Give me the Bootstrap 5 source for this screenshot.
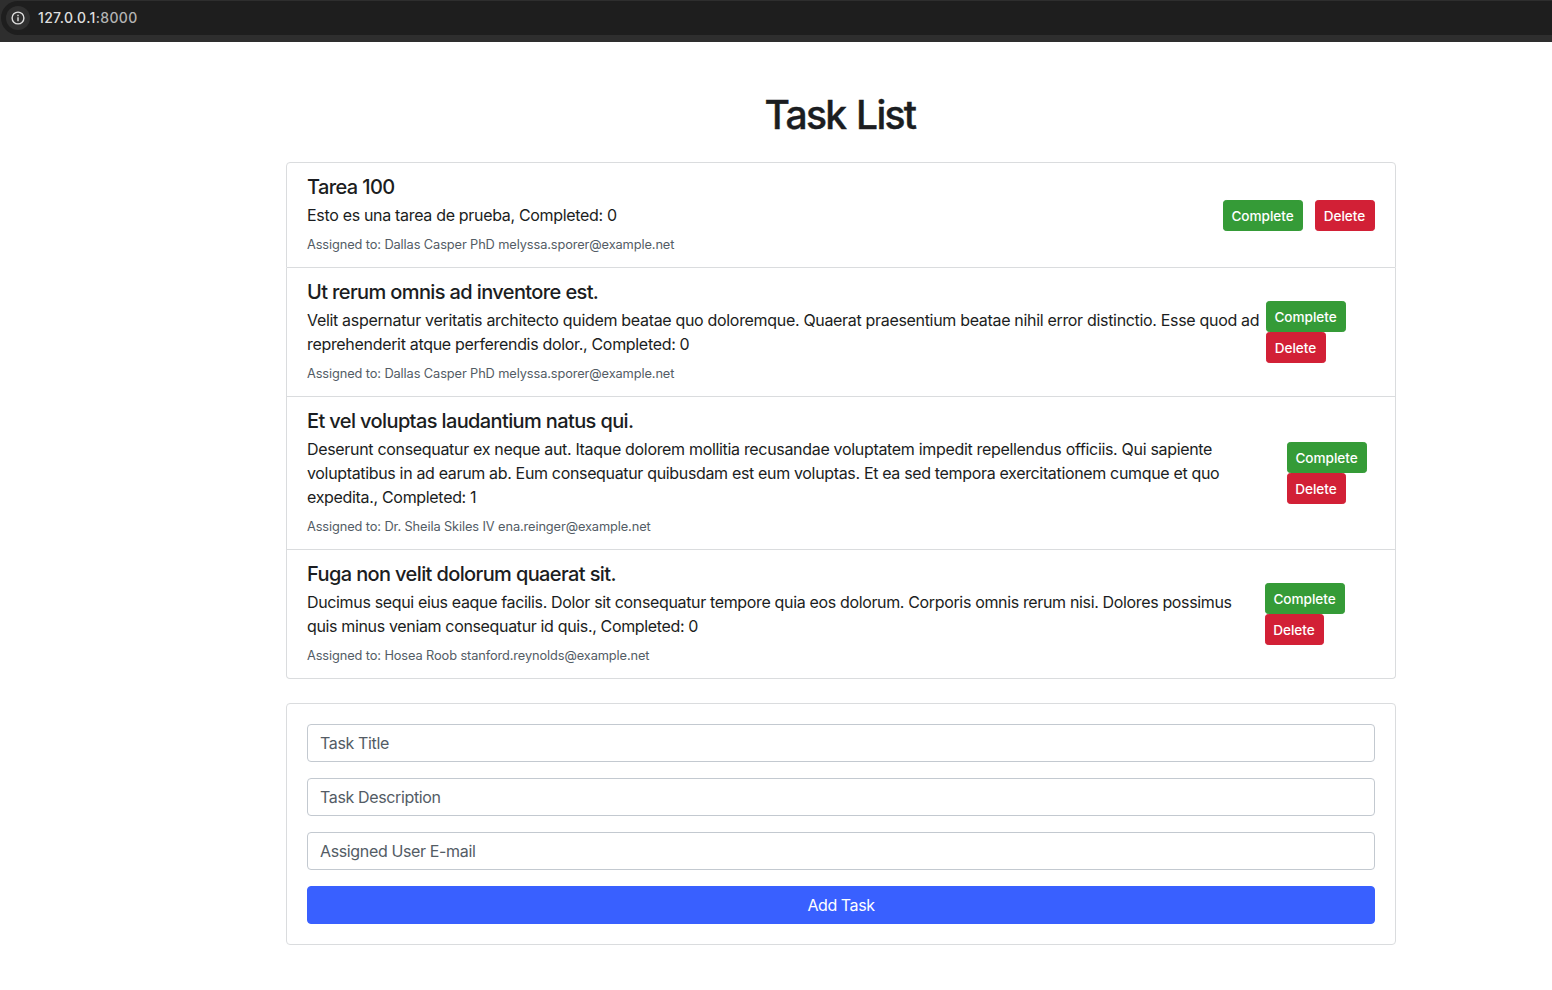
<!DOCTYPE html>
<html lang="en">
<head>
<meta charset="utf-8">
<meta name="viewport" content="width=device-width, initial-scale=1">
<title>Task List</title>
<link href="https://cdn.jsdelivr.net/npm/bootstrap@5.3.0/dist/css/bootstrap.min.css" rel="stylesheet">
<style>
  body { font-family: Inter, "Liberation Sans", sans-serif; color: #1b1d21; letter-spacing: -.32px; overflow: hidden; }
  .address-bar { height: 42px; background: #2e2e2e; padding-top: 1px; }
  .address-field { height: 34px; margin-left: 1px; padding-left: 5px; background: #1e1e1e; border-radius: 17px 0 0 17px; }
  .site-info { width: 24px; height: 24px; background: #303030; }
  .address-text { margin-left: 8px; margin-bottom: 1px; font-size: 14px; font-weight: 500; letter-spacing: .34px; color: #dedede; }
  .address-text span { color: #b4b4b4; }
  .page { padding-left: 130px; }
  .task-area { max-width: 1134px; }
  h1 { font-size: 39px; line-height: 50px; height: 48px; letter-spacing: -1.7px; word-spacing: 2px; padding-right: 2px; -webkit-text-stroke: .4px; }
  h5 { font-size: 20px; letter-spacing: -.62px; }
  .list-group { --bs-list-group-color: #1b1d21; --bs-list-group-border-color: #dadcde; --bs-list-group-border-radius: 4px; --bs-list-group-item-padding-x: 20px; --bs-list-group-item-padding-y: 12px; }
  .task-text { white-space: nowrap; }
  .assignee { font-size: 12.8px; letter-spacing: -.105px; color: #535c65; }
  .btn-sm { --bs-btn-border-radius: 3.2px; --bs-btn-font-size: 13.6px; height: 31px; padding: 5px 8px 3px 7px; font-weight: 500; letter-spacing: -.05px; }
  .btn-success { --bs-btn-bg: #359b37; --bs-btn-border-color: #359b37; width: 80px; }
  .btn-danger { --bs-btn-bg: #d22036; --bs-btn-border-color: #d22036; width: 60px; }
  .btn-primary { --bs-btn-bg: #3960ff; --bs-btn-border-color: #3960ff; --bs-btn-border-radius: 4px; letter-spacing: -.44px; }
  .actions-a { width: 109px; }
  .actions-b { width: 88px; }
  .actions-c { width: 110px; }
  .actions-b .btn-danger, .actions-c .btn-danger { width: 59px; }
  .card { --bs-card-border-color: #dadcde; --bs-card-border-radius: 4px; }
  .form-control { border-color: #c3c9d0; border-radius: 4px; letter-spacing: -.36px; }
  .form-control::placeholder { color: #535c65; }
</style>
</head>
<body class="bg-white">
<header class="address-bar">
  <div class="address-field d-flex align-items-center">
    <div class="site-info rounded-circle d-flex align-items-center justify-content-center">
      <svg width="14" height="14" viewBox="0 0 14 14" fill="none" stroke="#dedede" stroke-width="1.4"><circle cx="7" cy="7" r="5.9"/><path d="M7 6.3v3.9M7 3.8v1.4"/></svg>
    </div>
    <div class="address-text">127.0.0.1<span>:8000</span></div>
  </div>
</header>
<main class="page">
  <div class="container task-area pt-5">
    <h1 class="text-center mb-4">Task List</h1>
    <ul class="list-group mb-4">
      <li class="list-group-item d-flex justify-content-between align-items-center">
        <div class="task-text">
          <h5 class="mb-1">Tarea 100</h5>
          <p class="mb-1">Esto es una tarea de prueba, Completed: 0</p>
          <div><small class="assignee">Assigned to: Dallas Casper PhD melyssa.sporer@example.net</small></div>
        </div>
        <div class="d-flex flex-shrink-0" style="gap:12px">
          <button class="btn btn-success btn-sm">Complete</button>
          <button class="btn btn-danger btn-sm">Delete</button>
        </div>
      </li>
      <li class="list-group-item d-flex justify-content-between align-items-center">
        <div class="task-text">
          <h5 class="mb-1">Ut rerum omnis ad inventore est.</h5>
          <p class="mb-1">Velit aspernatur veritatis architecto quidem beatae quo doloremque. Quaerat praesentium beatae nihil error distinctio. Esse quod ad<br>reprehenderit atque perferendis dolor., Completed: 0</p>
          <div><small class="assignee">Assigned to: Dallas Casper PhD melyssa.sporer@example.net</small></div>
        </div>
        <div class="actions-a d-flex flex-column flex-shrink-0">
          <button class="btn btn-success btn-sm">Complete</button>
          <button class="btn btn-danger btn-sm">Delete</button>
        </div>
      </li>
      <li class="list-group-item d-flex justify-content-between align-items-center">
        <div class="task-text">
          <h5 class="mb-1">Et vel voluptas laudantium natus qui.</h5>
          <p class="mb-1">Deserunt consequatur ex neque aut. Itaque dolorem mollitia recusandae voluptatem impedit repellendus officiis. Qui sapiente<br><span style="letter-spacing:-.34px">voluptatibus in ad earum ab. Eum consequatur quibusdam est eum voluptas. Et ea sed tempora exercitationem cumque et quo</span><br>expedita., Completed: 1</p>
          <div><small class="assignee">Assigned to: Dr. Sheila Skiles IV ena.reinger@example.net</small></div>
        </div>
        <div class="actions-b d-flex flex-column flex-shrink-0">
          <button class="btn btn-success btn-sm">Complete</button>
          <button class="btn btn-danger btn-sm">Delete</button>
        </div>
      </li>
      <li class="list-group-item d-flex justify-content-between align-items-center">
        <div class="task-text">
          <h5 class="mb-1">Fuga non velit dolorum quaerat sit.</h5>
          <p class="mb-1" style="letter-spacing:-.35px">Ducimus sequi eius eaque facilis. Dolor sit consequatur tempore quia eos dolorum. Corporis omnis rerum nisi. Dolores possimus<br>quis minus veniam consequatur id quis., Completed: 0</p>
          <div><small class="assignee">Assigned to: Hosea Roob stanford.reynolds@example.net</small></div>
        </div>
        <div class="actions-c d-flex flex-column flex-shrink-0">
          <button class="btn btn-success btn-sm">Complete</button>
          <button class="btn btn-danger btn-sm">Delete</button>
        </div>
      </li>
    </ul>
    <form class="card">
      <div class="card-body d-grid gap-3" style="padding:20px">
        <input type="text" class="form-control" placeholder="Task Title">
        <input type="text" class="form-control" placeholder="Task Description">
        <input type="email" class="form-control" placeholder="Assigned User E-mail">
        <button type="button" class="btn btn-primary">Add Task</button>
      </div>
    </form>
  </div>
</main>
<script src="https://cdn.jsdelivr.net/npm/bootstrap@5.3.0/dist/js/bootstrap.bundle.min.js"></script>
</body>
</html>
